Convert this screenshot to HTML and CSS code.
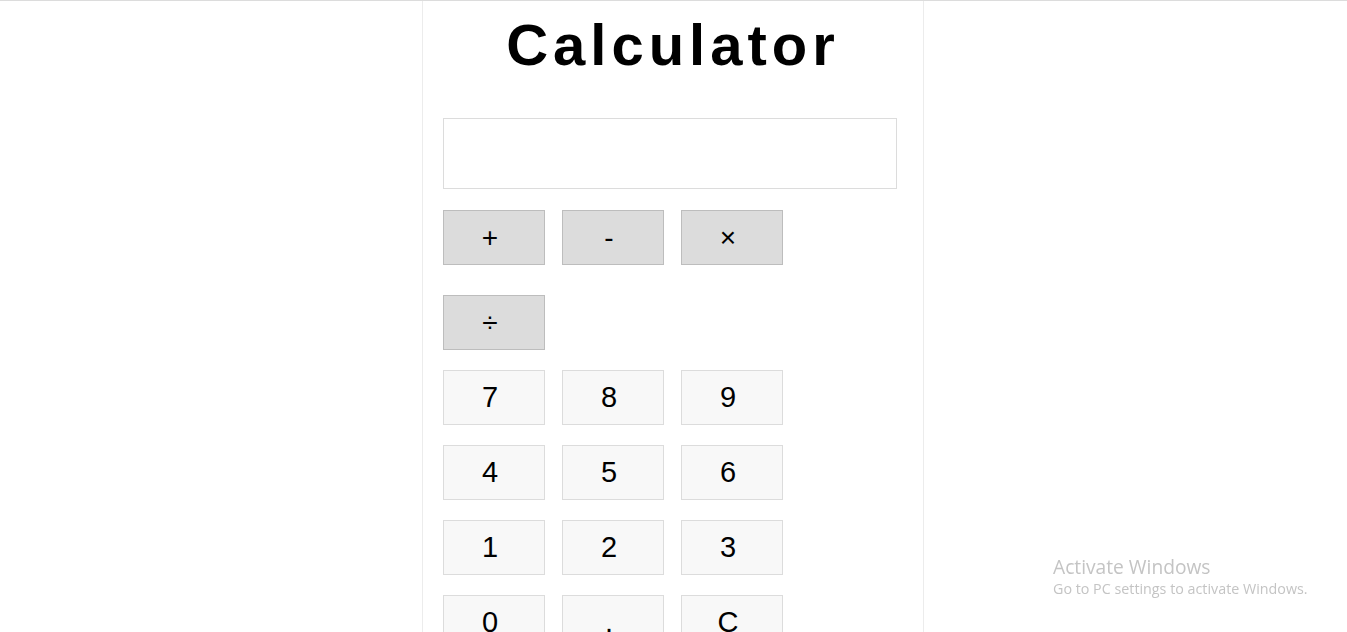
FILE: index.html
```html
<!DOCTYPE html>
<html>
<head>
<meta charset="utf-8">
<title>Calculator</title>
<link rel="stylesheet" href="styles.css">
</head>
<body>
<div class="calc">
  <h1 class="title">Calculator</h1>
  <div class="display"></div>
  <div class="ops">
    <button class="btn op">+</button>
    <button class="btn op">-</button>
    <button class="btn op">×</button>
    <button class="btn op">÷</button>
  </div>
  <div class="keys">
    <button class="btn">7</button>
    <button class="btn">8</button>
    <button class="btn">9</button>
    <button class="btn">4</button>
    <button class="btn">5</button>
    <button class="btn">6</button>
    <button class="btn">1</button>
    <button class="btn">2</button>
    <button class="btn">3</button>
    <button class="btn">0</button>
    <button class="btn">.</button>
    <button class="btn">C</button>
  </div>
</div>
<div class="watermark">
  <div class="wm-title">Activate Windows</div>
  <div class="wm-sub">Go to PC settings to activate Windows.</div>
</div>
</body>
</html>
```
FILE: styles.css
```css
html, body {
  margin: 0;
  padding: 0;
}
body {
  border-top: 1px solid #dcdcdc;
  background: #fff;
  font-family: "Liberation Sans", Arial, sans-serif;
  overflow: hidden;
}
.calc {
  width: 460px;
  padding: 0 20px 40px;
  margin: 0 0 0 calc(50% - 251.5px);
  border-left: 1px solid #ececec;
  border-right: 1px solid #ececec;
  min-height: 700px;
}
.title {
  margin: 0;
  padding-top: 11px;
  height: 117px;
  box-sizing: border-box;
  font-size: 58px;
  line-height: 1.15;
  font-weight: bold;
  letter-spacing: 5px;
  text-align: center;
  color: #000;
}
.display {
  width: 454px;
  height: 71px;
  box-sizing: border-box;
  border: 1px solid #dcdcdc;
  background: #fff;
}
.ops {
  display: flex;
  flex-wrap: wrap;
  width: 454px;
  gap: 30px 17px;
  margin-top: 21px;
}
.keys {
  display: grid;
  grid-template-columns: repeat(3, 102px);
  gap: 20px 17px;
  margin-top: 20px;
}
.btn {
  width: 102px;
  height: 55px;
  box-sizing: border-box;
  margin: 0;
  padding: 0 8px 0 0;
  border: 1px solid #dcdcdc;
  background: #f8f8f8;
  color: #000;
  font-family: "Liberation Sans", Arial, sans-serif;
  font-size: 29px;
}
.btn.op {
  background: #dcdcdc;
  border-color: #bdbdbd;
  font-size: 28px;
}
.watermark {
  position: fixed;
  left: 1053px;
  top: 555px;
  color: #c4c4c4;
  font-family: "Open Sans", "Noto Sans", sans-serif;
}
.wm-title {
  font-size: 19.2px;
  line-height: 24px;
}
.wm-sub {
  font-size: 14.3px;
  line-height: 20px;
}
```
